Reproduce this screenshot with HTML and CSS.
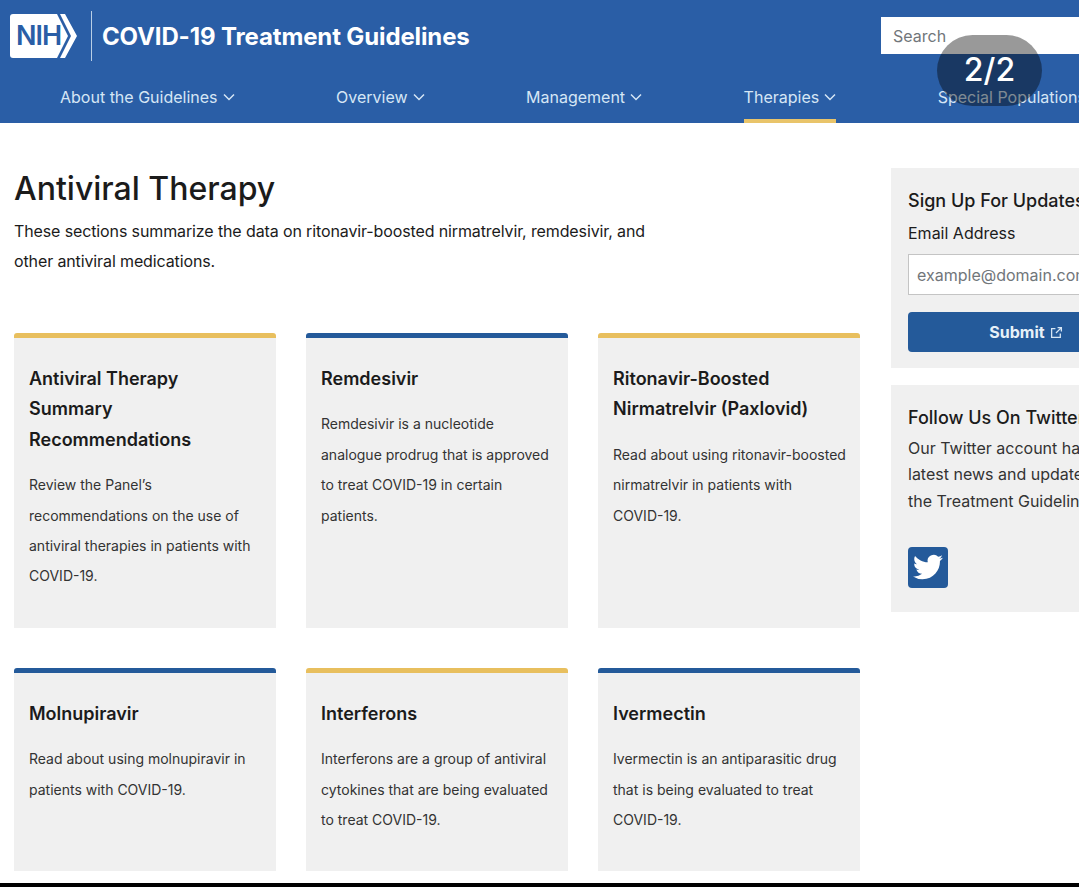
FILE: index.html
```html
<!DOCTYPE html>
<html lang="en">
<head>
    <meta charset="UTF-8">
    <meta name="viewport" content="width=device-width, initial-scale=1.0">
    <title>Antiviral Therapy | COVID-19 Treatment Guidelines</title>
    <link rel="stylesheet" href="styles.css">
</head>
<body>
    <header>
        <div class="top-bar">
            <svg class="logo" viewBox="0 0 68 44" width="68" height="44" aria-label="NIH">
                <path d="M3 0H47L58 22L47 44H3Q0 44 0 41V3Q0 0 3 0Z" fill="#fff"/>
                <path d="M50 0H55L67 22L55 44H50L61 22Z" fill="#fff"/>
                <text x="6" y="31" class="logo-text">NIH</text>
            </svg>
            <span class="divider"></span>
            <span class="site-title">COVID-19 Treatment Guidelines</span>
            <input class="search" type="text" placeholder="Search">
        </div>
        <nav class="nav">
            <a class="nav-item">About the Guidelines <svg class="chev" viewBox="0 0 12 8"><path d="M1 1.5L6 6.5L11 1.5"/></svg></a>
            <a class="nav-item">Overview <svg class="chev" viewBox="0 0 12 8"><path d="M1 1.5L6 6.5L11 1.5"/></svg></a>
            <a class="nav-item">Management <svg class="chev" viewBox="0 0 12 8"><path d="M1 1.5L6 6.5L11 1.5"/></svg></a>
            <a class="nav-item active">Therapies <svg class="chev" viewBox="0 0 12 8"><path d="M1 1.5L6 6.5L11 1.5"/></svg></a>
            <a class="nav-item">Special Populations <svg class="chev" viewBox="0 0 12 8"><path d="M1 1.5L6 6.5L11 1.5"/></svg></a>
        </nav>
    </header>

    <div class="counter">2/2</div>

    <div class="page">
        <main>
            <h1>Antiviral Therapy</h1>
            <p class="intro">These sections summarize the data on ritonavir-boosted nirmatrelvir, remdesivir, and other antiviral medications.</p>

            <div class="cards">
                <div class="card gold">
                    <h3>Antiviral Therapy Summary Recommendations</h3>
                    <p>Review the Panel’s recommendations on the use of antiviral therapies in patients with COVID-19.</p>
                </div>
                <div class="card blue">
                    <h3>Remdesivir</h3>
                    <p>Remdesivir is a nucleotide analogue prodrug that is approved to treat COVID-19 in certain patients.</p>
                </div>
                <div class="card gold">
                    <h3>Ritonavir-Boosted Nirmatrelvir (Paxlovid)</h3>
                    <p>Read about using ritonavir-boosted nirmatrelvir in patients with COVID-19.</p>
                </div>
                <div class="card blue">
                    <h3>Molnupiravir</h3>
                    <p>Read about using molnupiravir in patients with COVID-19.</p>
                </div>
                <div class="card gold">
                    <h3>Interferons</h3>
                    <p>Interferons are a group of antiviral cytokines that are being evaluated to treat COVID-19.</p>
                </div>
                <div class="card blue">
                    <h3>Ivermectin</h3>
                    <p>Ivermectin is an antiparasitic drug that is being evaluated to treat COVID-19.</p>
                </div>
            </div>
        </main>

        <aside class="sidebar">
            <div class="box signup">
                <h4>Sign Up For Updates</h4>
                <label for="email">Email Address</label>
                <input id="email" class="email" type="text" placeholder="example@domain.com">
                <button class="submit">Submit
                    <svg class="ext" viewBox="0 0 12 12"><path d="M9.5 7V10.5H1.5V2.5H5M7 1.5H10.5V5M10.5 1.5L5.5 6.5"/></svg>
                </button>
            </div>
            <div class="box follow">
                <h4>Follow Us On Twitter</h4>
                <p>Our Twitter account has the latest news and updates on the Treatment Guidelines.</p>
                <a class="twitter">
                    <svg viewBox="0 0 24 24" width="30" height="30"><path fill="#fff" d="M23.95 4.57a10 10 0 0 1-2.82.77 4.96 4.96 0 0 0 2.16-2.72c-.95.55-2 .96-3.12 1.19a4.92 4.92 0 0 0-8.38 4.48C7.69 8.1 4.07 6.13 1.64 3.16a4.82 4.82 0 0 0-.66 2.47c0 1.7.87 3.2 2.19 4.09a4.9 4.9 0 0 1-2.23-.62v.06a4.92 4.92 0 0 0 3.95 4.83 5 5 0 0 1-2.21.08 4.94 4.94 0 0 0 4.6 3.42A9.87 9.87 0 0 1 0 19.54a14 14 0 0 0 7.56 2.21c9.05 0 14-7.5 14-13.98 0-.21 0-.42-.02-.63a9.94 9.94 0 0 0 2.41-2.57Z"/></svg>
                </a>
            </div>
        </aside>
    </div>

    <div class="bottom-edge"></div>
</body>
</html>
```
FILE: styles.css
```css
html, body {
    margin: 0;
    padding: 0;
    height: 887px;
    overflow: hidden;
}
body {
    position: relative;
    font-family: Inter, "Liberation Sans", sans-serif;
    color: #1b1b1b;
    background-color: #fff;
}
header {
    height: 123px;
    background-color: #2a5ea6;
    color: #fff;
    overflow: hidden;
}
.top-bar {
    display: flex;
    align-items: center;
    height: 71px;
    padding-left: 10px;
}
.logo {
    flex: none;
}
.logo-text {
    font-size: 27px;
    font-weight: 600;
    letter-spacing: -1px;
    fill: #2a5ea6;
}
.divider {
    width: 1px;
    height: 50px;
    margin: 0 10px 0 13px;
    background-color: #b9cfe6;
}
.site-title {
    padding-top: 2px;
    font-size: 24px;
    font-weight: 700;
    letter-spacing: -0.13px;
    white-space: nowrap;
}
.search {
    flex: none;
    width: 240px;
    height: 37px;
    margin-left: auto;
    margin-right: -42px;
    padding: 0 12px;
    box-sizing: border-box;
    border: none;
    font-family: inherit;
    font-size: 16px;
}
.search::placeholder,
.email::placeholder {
    color: #71767a;
    opacity: 1;
}
.nav {
    display: flex;
    gap: 101.5px;
    height: 52px;
    padding-left: 60px;
}
.nav-item {
    display: flex;
    align-items: center;
    gap: 5px;
    font-size: 16px;
    color: #d6e6f5;
    white-space: nowrap;
}
.nav-item.active {
    box-shadow: inset 0 -4px 0 #e9c46a;
}
.chev {
    width: 12px;
    height: 8px;
    fill: none;
    stroke: #d6e6f5;
    stroke-width: 1.5;
}
.counter {
    position: absolute;
    top: 35px;
    left: 937px;
    width: 105px;
    height: 71px;
    border-radius: 36px;
    background-color: rgba(0, 0, 0, 0.4);
    color: #fff;
    font-size: 32px;
    font-weight: 500;
    line-height: 70px;
    text-align: center;
}
.page {
    display: flex;
    align-items: flex-start;
    padding-left: 14px;
}
main {
    flex: none;
    width: 846px;
}
h1 {
    margin: 45px 0 0;
    font-size: 32px;
    font-weight: 500;
    line-height: 42px;
}
.intro {
    width: 650px;
    margin: 6px 0 0;
    font-size: 16px;
    line-height: 30px;
    letter-spacing: -0.12px;
}
.cards {
    display: grid;
    grid-template-columns: repeat(3, 262px);
    grid-template-rows: 295px 203px;
    gap: 40px 30px;
    margin-top: 57px;
}
.card {
    padding: 15px 14px 0 15px;
    box-sizing: border-box;
    background-color: #f0f0f0;
    border-top: 5px solid;
    border-radius: 3px 3px 0 0;
}
.card.gold {
    border-top-color: #e8bf5e;
}
.card.blue {
    border-top-color: #245a9a;
}
.card h3 {
    margin: 11px 0 15px;
    font-size: 18px;
    font-weight: 600;
    line-height: 30.4px;
}
.card p {
    margin: 0;
    font-size: 14px;
    line-height: 30.4px;
    color: #333;
}
.sidebar {
    flex: none;
    width: 270px;
    margin-left: 31px;
    margin-top: 45px;
}
.box {
    padding: 18px 17px 0;
    box-sizing: border-box;
    background-color: #f0f0f0;
}
.signup {
    height: 200px;
}
.follow {
    height: 227px;
    margin-top: 17px;
}
.box h4 {
    margin: 0;
    font-size: 18px;
    font-weight: 500;
    line-height: 30px;
    white-space: nowrap;
}
.box label {
    display: block;
    margin-top: 4px;
    font-size: 16px;
    line-height: 26px;
}
.email {
    display: block;
    width: 100%;
    height: 41px;
    margin-top: 8px;
    padding: 0 8px;
    box-sizing: border-box;
    border: 1px solid #c4c4c4;
    background-color: #fff;
    font-family: inherit;
    font-size: 16px;
}
.submit {
    display: flex;
    align-items: center;
    justify-content: center;
    gap: 5px;
    width: 100%;
    height: 40px;
    margin-top: 17px;
    border: none;
    border-radius: 4px;
    background-color: #245a9a;
    color: #e6f0f8;
    font-family: inherit;
    font-size: 16px;
    font-weight: 700;
}
.ext {
    width: 13px;
    height: 13px;
    fill: none;
    stroke: #d6e6f5;
    stroke-width: 1.2;
}
.follow p {
    max-width: 216px;
    margin: 2px 0 0;
    font-size: 16px;
    line-height: 26.3px;
    color: #333;
}
.twitter {
    display: flex;
    align-items: center;
    justify-content: center;
    width: 40px;
    height: 41px;
    margin-top: 33px;
    border-radius: 4px;
    background-color: #245a9a;
}
.bottom-edge {
    position: absolute;
    left: 0;
    right: 0;
    bottom: 0;
    height: 4px;
    background-color: #000;
}
```
